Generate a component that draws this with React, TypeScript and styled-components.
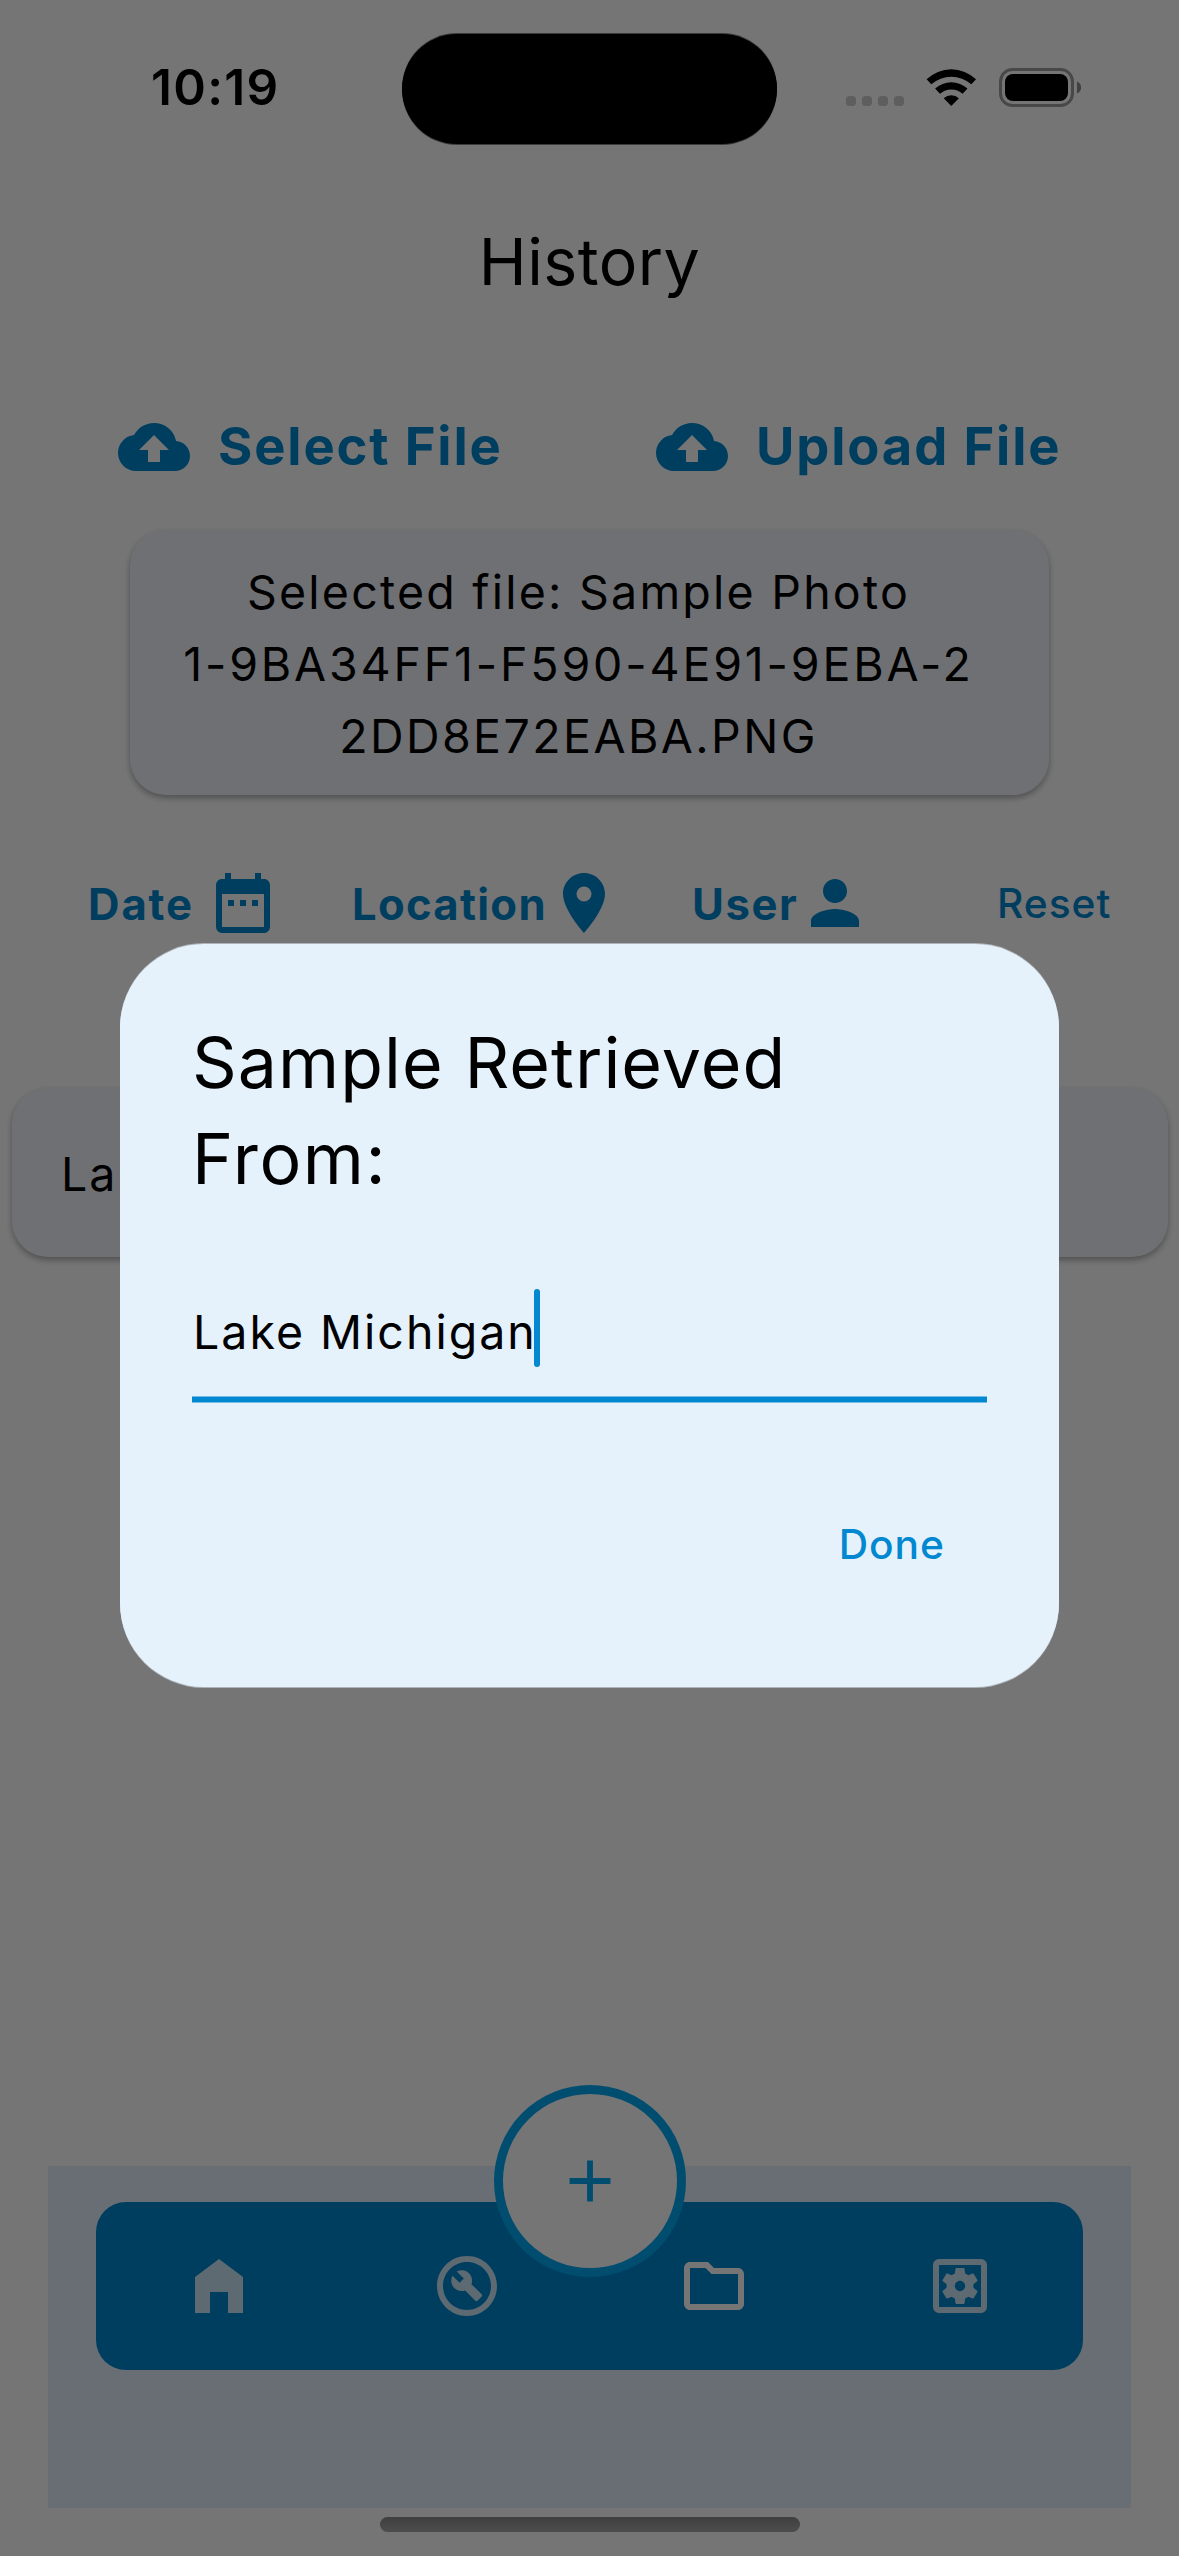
import React from "react";
import styled, { createGlobalStyle } from "styled-components";
import {
  MdAdd,
  MdCloudUpload,
  MdDateRange,
  MdLocationOn,
  MdOutlineBuildCircle,
  MdOutlineFolder,
  MdOutlineSettingsApplications,
  MdPerson,
} from "react-icons/md";

const color = {
  primary: "#0288d1",
  accent: "#03a9f4",
  surface: "#f1f4fa",
  navSurface: "#e5edfd",
  dialog: "#e5f2fc",
  navIdle: "#cce7f6",
};

const GlobalStyle = createGlobalStyle`
  *, *::before, *::after { box-sizing: border-box; }
  body { margin: 0; background: #fff; }
`;

const Screen = styled.main`
  position: relative;
  display: flex;
  flex-direction: column;
  width: 1179px;
  height: 2556px;
  overflow: hidden;
  background: #fff;
  color: #000;
  font-family: Inter, "Liberation Sans", sans-serif;
  font-weight: 400;
`;

/* Status bar */

const StatusBar = styled.header`
  flex: none;
  display: grid;
  grid-template-columns: 402px 375px 1fr;
  align-items: center;
  height: 177px;
`;

const Clock = styled.time`
  padding: 0 0 3px 151px;
  font-size: 49.5px;
  font-weight: 600;
  line-height: 60px;
  letter-spacing: 1.33px;
`;

const Island = styled.div`
  height: 110px;
  margin-top: 1px;
  border-radius: 55px;
  background: #000;
  box-shadow:
    0 -1px 0 rgba(0, 0, 0, 0.5),
    0 1px 0 rgba(0, 0, 0, 0.5);
`;

const StatusIcons = styled.div`
  display: flex;
  align-items: center;
  gap: 22px;
  padding-left: 69px;
`;

const SignalDots = styled.div`
  display: flex;
  gap: 6px;
  margin-top: 24px;
`;

const SignalDot = styled.i`
  width: 10px;
  height: 10px;
  border-radius: 3.5px;
  background: rgba(0, 0, 0, 0.2);
`;

const StatusGlyph = styled.svg`
  display: block;
  flex: none;
  margin-top: -2px;
`;

/* Page header and upload controls */

const AppBar = styled.div`
  flex: none;
  display: flex;
  align-items: center;
  justify-content: center;
  height: 168px;
  padding-top: 2px;
`;

const PageTitle = styled.h1`
  margin: 0;
  font-size: 64.4px;
  font-weight: 400;
  line-height: 84px;
  letter-spacing: 0.5px;
`;

const FileActions = styled.div`
  flex: none;
  display: grid;
  grid-template-columns: 538px 1fr;
  margin-top: 66px;
  padding-left: 118px;
`;

const FileButton = styled.button`
  display: flex;
  align-items: center;
  gap: 28px;
  height: 72px;
  padding: 0;
  border: 0;
  background: none;
  color: ${color.primary};
  font: inherit;
  font-size: 52.5px;
  font-weight: 700;
  line-height: 68px;
  letter-spacing: 1.85px;
  white-space: nowrap;

  svg { flex: none; }
`;

const FileButtonLabel = styled.span`
  padding-bottom: 2px;
`;

const Card = styled.section`
  flex: none;
  border-radius: 36px;
  background: ${color.surface};
  box-shadow: 0 3px 6px rgba(0, 0, 0, 0.32);
`;

const SelectedFileCard = styled(Card)`
  width: 919px;
  height: 265px;
  margin: 47px 0 0 130px;
  padding: 26px 22px 0 0;
  font-size: 46.5px;
  line-height: 72px;
  text-align: center;
`;

const Line = styled.span<{ $tracking: number }>`
  display: block;
  letter-spacing: ${(p) => p.$tracking}px;
  white-space: nowrap;
`;

/* Filters */

const Filters = styled.div`
  flex: none;
  display: grid;
  grid-template-columns: 264px 340px 305px 1fr;
  align-items: center;
  height: 72px;
  margin-top: 72px;
  padding-left: 88px;
`;

const Filter = styled.button`
  display: flex;
  align-items: center;
  padding: 0;
  border: 0;
  background: none;
  color: ${color.primary};
  font: inherit;
  font-size: 43.6px;
  font-weight: 700;
  line-height: 60px;

  svg { flex: none; }
`;

const FilterLabel = styled.span<{ $width: number; $tracking: number }>`
  width: ${(p) => p.$width}px;
  padding-top: 4px;
  letter-spacing: ${(p) => p.$tracking}px;
  text-align: left;
  white-space: nowrap;
`;

const TextButton = styled.button`
  padding: 0;
  border: 0;
  background: none;
  color: ${color.primary};
  font: inherit;
  font-size: 40.7px;
  font-weight: 500;
  line-height: 60px;
  letter-spacing: 1px;
  text-align: left;
`;

const ResetButton = styled(TextButton)`
  padding-top: 2px;
`;

const RecordCard = styled(Card)`
  display: flex;
  align-items: center;
  height: 169px;
  margin: 149px 11px 0 12px;
  padding: 3px 0 0 49px;
  font-size: 46.5px;
  line-height: 72px;
  letter-spacing: 2px;
`;

/* Bottom navigation */

const NavSurface = styled.footer`
  position: relative;
  flex: none;
  height: 342px;
  margin: auto 48px 0;
  padding: 36px 48px 0;
  background: ${color.navSurface};
`;

const NavBar = styled.nav`
  display: grid;
  grid-template-columns: 246px 250px 244px 1fr;
  height: 168px;
  border-radius: 30px;
  background: ${color.primary};
`;

const NavItem = styled.button<{ $active?: boolean }>`
  display: flex;
  align-items: center;
  justify-content: center;
  padding: 0;
  border: 0;
  background: none;
  color: ${(p) => (p.$active ? "#fff" : color.navIdle)};
`;

const AddButton = styled.button`
  position: absolute;
  top: -81px;
  left: 50%;
  display: flex;
  align-items: center;
  justify-content: center;
  width: 192px;
  height: 192px;
  margin-left: -96px;
  padding: 0;
  border: 9px solid ${color.accent};
  border-radius: 50%;
  background: #fff;
  color: ${color.accent};
`;

const HomeArea = styled.div`
  flex: none;
  display: flex;
  justify-content: center;
  height: 48px;
  padding-top: 9px;
`;

const HomeIndicator = styled.div`
  width: 420px;
  height: 15px;
  border-radius: 8px;
  background: linear-gradient(rgba(0, 0, 0, 0.46), rgba(0, 0, 0, 0.34));
`;

/* Dialog */

const Scrim = styled.div`
  position: absolute;
  inset: 0;
  display: flex;
  align-items: flex-start;
  justify-content: center;
  padding-top: 944px;
  background: rgba(0, 0, 0, 0.54);
`;

const Dialog = styled.div`
  width: 939px;
  height: 743px;
  padding: 71px 72px 0;
  border-radius: 84px;
  background: ${color.dialog};
  box-shadow:
    0 -1px 0 rgba(229, 242, 252, 0.5),
    0 1px 0 rgba(229, 242, 252, 0.5);
`;

const DialogTitle = styled.h2`
  margin: 0;
  font-size: 69.8px;
  font-weight: 400;
  line-height: 96px;
`;

const Field = styled.div`
  display: flex;
  align-items: flex-start;
  height: 113px;
  margin-top: 82px;
  border-bottom: 5px solid ${color.primary};
  box-shadow:
    0 1px 0 rgba(2, 136, 209, 0.5),
    inset 0 -1px 0 rgba(2, 136, 209, 0.5);
`;

const FieldValue = styled.span`
  padding: 4px 0 0 1px;
  font-size: 46.5px;
  line-height: 78px;
  letter-spacing: 2px;
`;

const Caret = styled.i`
  width: 6px;
  height: 78px;
  margin-left: -3px;
  border-radius: 3px;
  background: ${color.primary};
`;

const DialogActions = styled.div`
  display: flex;
  justify-content: flex-end;
  margin-top: 113px;
  padding-right: 42px;
`;

const Wifi = () => (
  <StatusGlyph width="51" height="38" viewBox="0 0 51 38">
    <path d="M.6 10.3A35.5 35.5 0 0 1 50 10.3L45.3 15.3A30 30 0 0 0 5.3 15.3Z" />
    <path d="M9.1 19.6A24 24 0 0 1 41.5 19.6L36.6 24.8A17 17 0 0 0 14 24.8Z" />
    <path d="M17.7 29.2A11.5 11.5 0 0 1 32.9 29.2L25.3 37.1Z" />
  </StatusGlyph>
);

const Battery = () => (
  <StatusGlyph width="82" height="39" viewBox="0 0 82 39">
    <rect x="1.5" y="1.5" width="72" height="36" rx="12" fill="none" stroke="#000" strokeOpacity=".38" strokeWidth="3" />
    <rect x="6" y="6" width="63" height="27" rx="8" />
    <path d="M78 13.6c2.600 1 4.100 3.300 4.100 5.900s-1.500 4.900-4.100 5.900z" fillOpacity=".45" />
  </StatusGlyph>
);

const Home = () => (
  <svg width="72" height="72" viewBox="0 0 24 24" fill="currentColor">
    <path d="M12 3 4 9v12h5v-7h6v7h5V9z" />
  </svg>
);

const filters = [
  { label: "Date", width: 119, tracking: 1.9, Icon: MdDateRange },
  { label: "Location", width: 196, tracking: 1.3, Icon: MdLocationOn },
  { label: "User", width: 107, tracking: 1.6, Icon: MdPerson },
];

export default function App() {
  return (
    <>
      <GlobalStyle />
      <Screen>
        <StatusBar>
          <Clock>10:19</Clock>
          <Island />
          <StatusIcons>
            <SignalDots>
              <SignalDot />
              <SignalDot />
              <SignalDot />
              <SignalDot />
            </SignalDots>
            <Wifi />
            <Battery />
          </StatusIcons>
        </StatusBar>

        <AppBar>
          <PageTitle>History</PageTitle>
        </AppBar>

        <FileActions>
          <FileButton>
            <MdCloudUpload size={72} />
            <FileButtonLabel>Select File</FileButtonLabel>
          </FileButton>
          <FileButton>
            <MdCloudUpload size={72} />
            <FileButtonLabel>Upload File</FileButtonLabel>
          </FileButton>
        </FileActions>

        <SelectedFileCard>
          <Line $tracking={2.23}>Selected file: Sample Photo</Line>
          <Line $tracking={2.84}>1-9BA34FF1-F590-4E91-9EBA-2</Line>
          <Line $tracking={2.43}>2DD8E72EABA.PNG</Line>
        </SelectedFileCard>

        <Filters>
          {filters.map(({ label, width, tracking, Icon }) => (
            <Filter key={label}>
              <FilterLabel $width={width} $tracking={tracking}>
                {label}
              </FilterLabel>
              <Icon size={72} />
            </Filter>
          ))}
          <ResetButton>Reset</ResetButton>
        </Filters>

        <RecordCard>La</RecordCard>

        <NavSurface>
          <NavBar>
            <NavItem aria-label="Home">
              <Home />
            </NavItem>
            <NavItem aria-label="Tools">
              <MdOutlineBuildCircle size={72} />
            </NavItem>
            <NavItem aria-label="Files" $active>
              <MdOutlineFolder size={72} />
            </NavItem>
            <NavItem aria-label="Settings">
              <MdOutlineSettingsApplications size={72} />
            </NavItem>
          </NavBar>
          <AddButton aria-label="Add">
            <MdAdd size={70} />
          </AddButton>
        </NavSurface>

        <HomeArea>
          <HomeIndicator />
        </HomeArea>

        <Scrim>
          <Dialog role="dialog">
            <DialogTitle>
              <Line $tracking={1.05}>Sample Retrieved</Line>
              <Line $tracking={1.58}>From:</Line>
            </DialogTitle>
            <Field>
              <FieldValue>Lake Michigan</FieldValue>
              <Caret />
            </Field>
            <DialogActions>
              <TextButton>Done</TextButton>
            </DialogActions>
          </Dialog>
        </Scrim>
      </Screen>
    </>
  );
}
